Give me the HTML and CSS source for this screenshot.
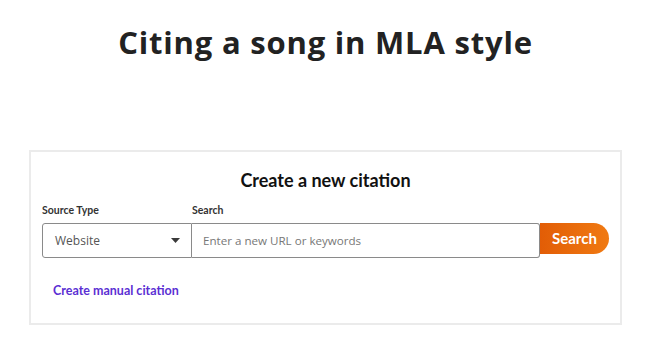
FILE: index.html
```html
<!DOCTYPE html>
<html lang="en">
<head>
    <meta charset="UTF-8">
    <meta name="viewport" content="width=device-width, initial-scale=1.0">
    <title>Citing a song in MLA style</title>
    <link rel="stylesheet" href="styles.css">
</head>
<body>
    <div class="page">
        <h1 class="page-title">Citing a song in MLA style</h1>

        <div class="citation-box">
            <h2 class="citation-title">Create a new citation</h2>

            <div class="citation-form">
                <div class="field field-type">
                    <label class="field-label">Source Type</label>
                    <div class="select">
                        <span>Website</span>
                        <svg class="caret" width="9" height="5" viewBox="0 0 9 5"><path d="M0 0 L9 0 L4.5 5 Z" fill="#3a3a3a"/></svg>
                    </div>
                </div>
                <div class="field field-search">
                    <label class="field-label">Search</label>
                    <input class="search-input" type="text" placeholder="Enter a new URL or keywords">
                </div>
                <button class="search-btn">Search</button>
            </div>

            <a class="manual-link" href="#">Create manual citation</a>
        </div>
    </div>
</body>
</html>
```

FILE: styles.css
```css
body { margin: 0; font-family: Lato, "Open Sans", sans-serif; color: #222; background: #fff; }
.page { width: 651px; padding-top: 24px; }
.page-title { margin: 0; font-family: "Open Sans", sans-serif; font-size: 31px; line-height: 36px; font-weight: 700; letter-spacing: 0.8px; text-align: center; color: #222; }

.citation-box { width: 567px; margin: 90px auto 0; border: 2px solid #ebebeb; padding: 18px 11px 25px; }
.citation-title { margin: 0 0 14px; font-size: 18px; line-height: 20px; font-weight: 700; text-align: center; color: #111; }

.citation-form { display: flex; align-items: flex-end; }
.field { display: flex; flex-direction: column; gap: 7px; }
.field-type { width: 150px; }
.field-search { width: 348px; }
.field-label { font-size: 10.5px; line-height: 12px; font-weight: 700; color: #333; }

.select { box-sizing: border-box; height: 35px; border: 1px solid #8a8a8a; border-radius: 3px 0 0 3px; display: flex; align-items: center; justify-content: space-between; padding: 0 11px 0 12px; font-family: "Open Sans", sans-serif; font-size: 12px; color: #555; }
.search-input { box-sizing: border-box; height: 35px; margin: 0; border: 1px solid #8a8a8a; border-left: none; border-radius: 0 3px 3px 0; padding: 0 11px; font-family: "Open Sans", sans-serif; font-size: 11.6px; color: #333; outline: none; }
.search-input::placeholder { color: #777; }

.search-btn { align-self: flex-start; margin-top: 19px; width: 69px; height: 31px; border: none; border-radius: 0 16px 16px 0; background: linear-gradient(90deg, #e25d06, #f07a12); color: #fff; font-family: Lato, sans-serif; font-size: 15px; font-weight: 700; padding: 0 0 2px; }

.manual-link { display: inline-block; margin: 26px 0 0 11px; font-size: 12.5px; line-height: 14px; font-weight: 700; color: #5b2fd3; text-decoration: none; }
```
